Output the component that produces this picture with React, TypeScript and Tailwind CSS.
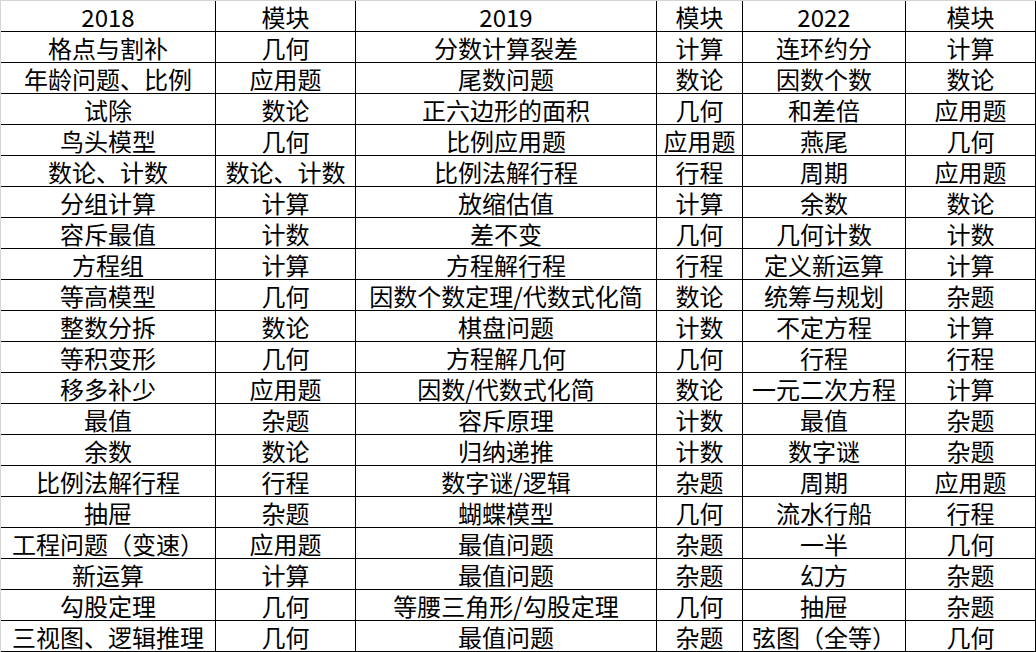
import * as React from "react"

const header = ["2018", "模块", "2019", "模块", "2022", "模块"]

const rows = [
    ["格点与割补", "几何", "分数计算裂差", "计算", "连环约分", "计算"],
    ["年龄问题、比例", "应用题", "尾数问题", "数论", "因数个数", "数论"],
    ["试除", "数论", "正六边形的面积", "几何", "和差倍", "应用题"],
    ["鸟头模型", "几何", "比例应用题", "应用题", "燕尾", "几何"],
    ["数论、计数", "数论、计数", "比例法解行程", "行程", "周期", "应用题"],
    ["分组计算", "计算", "放缩估值", "计算", "余数", "数论"],
    ["容斥最值", "计数", "差不变", "几何", "几何计数", "计数"],
    ["方程组", "计算", "方程解行程", "行程", "定义新运算", "计算"],
    ["等高模型", "几何", "因数个数定理/代数式化简", "数论", "统筹与规划", "杂题"],
    ["整数分拆", "数论", "棋盘问题", "计数", "不定方程", "计算"],
    ["等积变形", "几何", "方程解几何", "几何", "行程", "行程"],
    ["移多补少", "应用题", "因数/代数式化简", "数论", "一元二次方程", "计算"],
    ["最值", "杂题", "容斥原理", "计数", "最值", "杂题"],
    ["余数", "数论", "归纳递推", "计数", "数字谜", "杂题"],
    ["比例法解行程", "行程", "数字谜/逻辑", "杂题", "周期", "应用题"],
    ["抽屉", "杂题", "蝴蝶模型", "几何", "流水行船", "行程"],
    ["工程问题（变速）", "应用题", "最值问题", "杂题", "一半", "几何"],
    ["新运算", "计算", "最值问题", "杂题", "幻方", "杂题"],
    ["勾股定理", "几何", "等腰三角形/勾股定理", "几何", "抽屉", "杂题"],
    ["三视图、逻辑推理", "几何", "最值问题", "杂题", "弦图（全等）", "几何"],
]

function Row({ cells }: { cells: string[] }) {
    return (
        <>
            {cells.map((text, i) => (
                <div
                    key={i}
                    className="h-[31px] border-r border-b border-black flex items-center justify-center pt-[2px] whitespace-nowrap"
                >
                    <span className="leading-[24px]">{text}</span>
                </div>
            ))}
        </>
    )
}

export default function App() {
    return (
        <div className="w-[1036px] h-[652px] bg-white overflow-hidden">
            <div
                className="grid grid-cols-[215px_140px_301px_86px_163px_130px] border-t border-l border-[#d4d4d4] text-[24px] text-black"
                style={{ fontFamily: '"Noto Sans CJK SC", "Noto Sans", sans-serif' }}
            >
                <Row cells={header} />
                {rows.map((r, idx) => (
                    <Row key={idx} cells={r} />
                ))}
            </div>
        </div>
    )
}
